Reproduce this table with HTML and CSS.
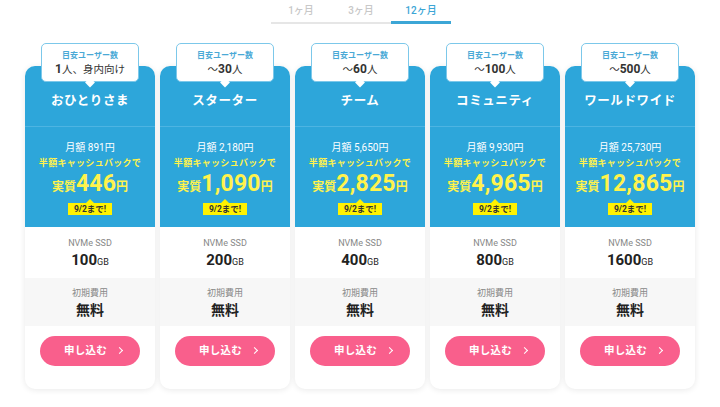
FILE: index.html
```html
<!DOCTYPE html>
<html lang="ja">
<head>
<meta charset="utf-8">
<link rel="stylesheet" href="styles.css">
</head>
<body>
<div class="page">
  <div class="tabs">
    <div class="tab">1ヶ月</div>
    <div class="tab">3ヶ月</div>
    <div class="tab active">12ヶ月</div>
  </div>
  <div class="cards">
    <div class="card">
      <div class="bubble"><div class="b-label">目安ユーザー数</div><div class="b-value"><b>1</b>人、身内向け</div></div>
      <div class="head">おひとりさま</div>
      <div class="price">
        <div class="monthly">月額 891円</div>
        <div class="cb">半額キャッシュバックで</div>
        <div class="real"><span class="rs">実質</span><span class="rn">446</span><span class="ry">円</span></div>
        <div class="badge">9/2まで!</div>
      </div>
      <div class="spec"><div class="s-label">NVMe SSD</div><div class="s-value">100<small>GB</small></div></div>
      <div class="fee"><div class="s-label">初期費用</div><div class="s-value">無料</div></div>
      <div class="cta"><div class="btn">申し込む<span class="chev"></span></div></div>
    </div>
    <div class="card">
      <div class="bubble"><div class="b-label">目安ユーザー数</div><div class="b-value">～<b>30</b>人</div></div>
      <div class="head">スターター</div>
      <div class="price">
        <div class="monthly">月額 2,180円</div>
        <div class="cb">半額キャッシュバックで</div>
        <div class="real"><span class="rs">実質</span><span class="rn">1,090</span><span class="ry">円</span></div>
        <div class="badge">9/2まで!</div>
      </div>
      <div class="spec"><div class="s-label">NVMe SSD</div><div class="s-value">200<small>GB</small></div></div>
      <div class="fee"><div class="s-label">初期費用</div><div class="s-value">無料</div></div>
      <div class="cta"><div class="btn">申し込む<span class="chev"></span></div></div>
    </div>
    <div class="card">
      <div class="bubble"><div class="b-label">目安ユーザー数</div><div class="b-value">～<b>60</b>人</div></div>
      <div class="head">チーム</div>
      <div class="price">
        <div class="monthly">月額 5,650円</div>
        <div class="cb">半額キャッシュバックで</div>
        <div class="real"><span class="rs">実質</span><span class="rn">2,825</span><span class="ry">円</span></div>
        <div class="badge">9/2まで!</div>
      </div>
      <div class="spec"><div class="s-label">NVMe SSD</div><div class="s-value">400<small>GB</small></div></div>
      <div class="fee"><div class="s-label">初期費用</div><div class="s-value">無料</div></div>
      <div class="cta"><div class="btn">申し込む<span class="chev"></span></div></div>
    </div>
    <div class="card">
      <div class="bubble"><div class="b-label">目安ユーザー数</div><div class="b-value">～<b>100</b>人</div></div>
      <div class="head">コミュニティ</div>
      <div class="price">
        <div class="monthly">月額 9,930円</div>
        <div class="cb">半額キャッシュバックで</div>
        <div class="real"><span class="rs">実質</span><span class="rn">4,965</span><span class="ry">円</span></div>
        <div class="badge">9/2まで!</div>
      </div>
      <div class="spec"><div class="s-label">NVMe SSD</div><div class="s-value">800<small>GB</small></div></div>
      <div class="fee"><div class="s-label">初期費用</div><div class="s-value">無料</div></div>
      <div class="cta"><div class="btn">申し込む<span class="chev"></span></div></div>
    </div>
    <div class="card">
      <div class="bubble"><div class="b-label">目安ユーザー数</div><div class="b-value">～<b>500</b>人</div></div>
      <div class="head">ワールドワイド</div>
      <div class="price">
        <div class="monthly">月額 25,730円</div>
        <div class="cb">半額キャッシュバックで</div>
        <div class="real"><span class="rs">実質</span><span class="rn">12,865</span><span class="ry">円</span></div>
        <div class="badge">9/2まで!</div>
      </div>
      <div class="spec"><div class="s-label">NVMe SSD</div><div class="s-value">1600<small>GB</small></div></div>
      <div class="fee"><div class="s-label">初期費用</div><div class="s-value">無料</div></div>
      <div class="cta"><div class="btn">申し込む<span class="chev"></span></div></div>
    </div>
  </div>
</div>
</body>
</html>
```

FILE: styles.css
```css
* { box-sizing: border-box; }
body {
  margin: 0;
  background: #fff;
  font-family: Roboto, "Noto Sans CJK JP", sans-serif;
  color: #333;
}
.page { width: 720px; height: 407px; overflow: hidden; }
.tabs {
  display: flex;
  justify-content: center;
  margin: 0 auto;
  width: 180px;
  border-bottom: 2px solid #e6e6e6;
  position: relative;
  left: 1px;
}
.tab {
  width: 60px;
  text-align: center;
  font-size: 10px;
  line-height: 21px;
  color: #c8c8c8;
  font-weight: 500;
  margin-bottom: -2px;
  border-bottom: 3px solid transparent;
}
.tab.active { color: #3ca6d6; border-bottom-color: #3ca6d6; }

.cards {
  display: flex;
  gap: 5px;
  justify-content: center;
  margin-top: 42px;
}
.card {
  width: 130px;
  height: 323px;
  background: #fff;
  border-radius: 10px;
  box-shadow: 0 1px 6px rgba(0,0,0,0.09);
  position: relative;
  display: flex;
  flex-direction: column;
}
.bubble {
  position: absolute;
  left: 16px;
  top: -23px;
  width: 98px;
  height: 39px;
  background: #fff;
  border: 1px solid #7cc8ea;
  border-radius: 5px;
  text-align: center;
  z-index: 2;
}
.bubble::after {
  content: "";
  position: absolute;
  left: 50%;
  bottom: -5px;
  width: 7px;
  height: 7px;
  background: #fff;
  transform: translateX(-50%) rotate(45deg);
}
.b-label {
  font-size: 8px;
  font-weight: 700;
  color: #4aa9d6;
  line-height: 10px;
  margin-top: 7px;
}
.b-value {
  font-size: 10.5px;
  line-height: 15px;
  color: #333;
  margin-top: 1px;
}
.b-value b { font-size: 12px; font-weight: 700; }
.head {
  height: 61px;
  background: #2da6da;
  border-radius: 10px 10px 0 0;
  border-bottom: 1px solid #4db4e2;
  color: #fff;
  font-weight: 700;
  font-size: 12.5px;
  text-align: center;
  padding-top: 25px;
  line-height: 20px;
  letter-spacing: 0.6px;
}
.price {
  height: 100px;
  background: #2da6da;
  text-align: center;
  padding-top: 14px;
}
.monthly { color: #fff; font-size: 10px; line-height: 14px; }
.cb { color: #fff34c; font-size: 9px; font-weight: 700; line-height: 15px; margin-top: 1px; letter-spacing: 0.3px; }
.real {
  color: #fff34c;
  font-weight: 700;
  line-height: 26px;
  display: flex;
  justify-content: center;
  align-items: baseline;
}
.rs { font-size: 12px; }
.rn { font-size: 23px; letter-spacing: 0.2px; }
.ry { font-size: 12px; }
.badge {
  position: relative;
  display: block;
  width: fit-content;
  margin: 3px auto 0;
  background: #fff200;
  color: #333;
  font-size: 8.5px;
  font-weight: 700;
  line-height: 12px;
  padding: 0 6px;
}
.badge::before {
  content: "";
  position: absolute;
  left: 50%;
  top: -4px;
  transform: translateX(-50%);
  border-left: 4px solid transparent;
  border-right: 4px solid transparent;
  border-bottom: 4px solid #fff200;
}
.spec, .fee {
  text-align: center;
}
.spec { height: 51px; padding-top: 9px; }
.fee { height: 48px; background: #f7f7f7; padding-top: 8px; }
.s-label { font-size: 9px; color: #888; line-height: 14px; }
.s-value { font-size: 15px; font-weight: 700; color: #222; line-height: 18px; margin-top: 1px; }
.s-value small { font-size: 9px; font-weight: 400; }
.fee .s-value { font-size: 14px; }
.cta {
  flex: 1;
  display: flex;
  justify-content: center;
  padding-top: 10px;
}
.btn {
  width: 100px;
  height: 30px;
  border-radius: 15px;
  background: #f95f8c;
  color: #fff;
  font-weight: 700;
  font-size: 10.5px;
  line-height: 30px;
  text-align: center;
  padding-left: 6px;
  letter-spacing: 0.3px;
}
.chev {
  display: inline-block;
  width: 5px;
  height: 5px;
  border-top: 1.6px solid #fff;
  border-right: 1.6px solid #fff;
  transform: rotate(45deg);
  margin-left: 10px;
  vertical-align: 1px;
}
```
